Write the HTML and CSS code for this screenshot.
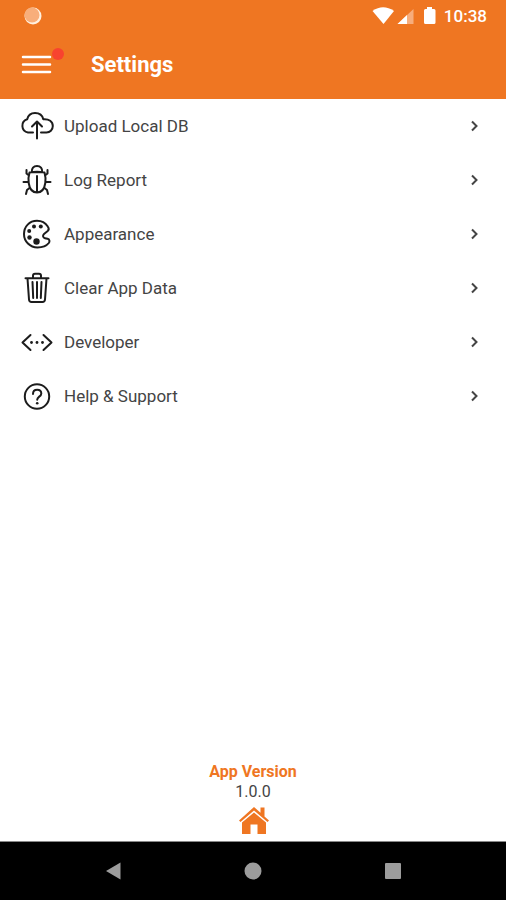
FILE: index.html
```html
<!DOCTYPE html>
<html lang="en">
<head>
<meta charset="utf-8">
<meta name="viewport" content="width=device-width, initial-scale=1">
<title>Settings</title>
<link rel="stylesheet" href="styles.css">
</head>
<body>
<header class="top">
  <div class="status">
    <svg class="status-sync" viewBox="0 0 18 18" aria-hidden="true"><circle cx="9" cy="9" r="8.500" fill="#fff0df"/><circle cx="8" cy="8" r="7.500" fill="#f8ae7b"/></svg>
    <div class="status-right">
      <svg class="status-icons" viewBox="0 0 66 20" aria-hidden="true">
        <path d="M.5 5Q11 -2.500 22 5L11.500 18Z" fill="#fff"/>
        <path d="M41.500 3v15H25.500Z" fill="#f7ad7c"/>
        <path d="M35 9v9h-9.500Z" fill="#fff"/>
        <path d="M55 1h5v2h2q1.500 0 1.500 1.500v12q0 1.500-1.500 1.500h-8.500q-1.500 0-1.500-1.500v-12q0-1.500 1.500-1.500h1.500Z" fill="#fff"/>
      </svg>
      <span class="clock">10:38</span>
    </div>
  </div>
  <div class="bar">
    <button class="menu" type="button" aria-label="Menu">
      <svg class="menu-icon" viewBox="0 0 32 20" aria-hidden="true"><path d="M2 2h27M2 9.500h27M2 17h27" stroke="#fff" stroke-width="2.500" stroke-linecap="round"/></svg>
      <span class="badge"></span>
    </button>
    <h1 class="title">Settings</h1>
  </div>
</header>
<main class="main">
  <nav class="list" aria-label="Settings">
    <a class="row" href="#upload">
      <svg class="icon" viewBox="0 0 36 36"><path d="M14 24.500H9a6.800 6.800 0 0 1-.8-13.200C9 7.800 11.500 5 16 5c4.400 0 7.500 2.600 8.300 6.300C30 10.800 33.800 13.500 33.800 18c0 4-3 6.500-6.300 6.500H22M18 30.500v-17M13 18.500l5-5 5 5"/></svg>
      <span class="label">Upload Local DB</span>
      <svg class="chevron" viewBox="0 0 12 12"><path d="M4 1.500 8.500 6 4 10.500"/></svg>
    </a>
    <a class="row" href="#log">
      <svg class="icon" viewBox="0 0 36 36"><path d="M12.800 10.200C12.500 6.500 14.500 4 18 4s5.500 2.500 5.200 6.200ZM10.500 10.500Q18 9 25.500 10.500C26.500 14 27 17 26.300 21 25.500 26.500 22.500 30.500 18 30.500s-7.500-4-8.300-9.500c-.7-4-.2-7 .8-10.500ZM18 14V29M10 13.500 7.500 11.500V8M26 13.500l2.500-2V8M9.500 20H4.500M26.500 20H31.500M10.500 26l-2.500 2-1 4M25.500 26l2.500 2 1 4"/></svg>
      <span class="label">Log Report</span>
      <svg class="chevron" viewBox="0 0 12 12"><path d="M4 1.500 8.500 6 4 10.500"/></svg>
    </a>
    <a class="row" href="#appearance">
      <svg class="icon" viewBox="0 0 36 36"><path d="M28.800 10.500C26.500 7 22.500 4.800 18 4.800 10.500 4.800 5 10.500 5 18s6 13.500 13.500 13.500c4.500 0 9-1.600 11.300-4.500 1.200-1.600.8-3.700-1.300-4.200l-2.500-.6c-2-.5-2.700-2.700-1-4.200l3.700-3c1.500-1.300 1-3.200.1-4.500Z"/><g class="solid"><circle cx="15" cy="10.500" r="2"/><circle cx="21.800" cy="10.500" r="2"/><circle cx="10.200" cy="15" r="2"/><circle cx="10.500" cy="21.500" r="2.200"/><circle cx="17.500" cy="25.500" r="3.200"/></g></svg>
      <span class="label">Appearance</span>
      <svg class="chevron" viewBox="0 0 12 12"><path d="M4 1.500 8.500 6 4 10.500"/></svg>
    </a>
    <a class="row" href="#clear">
      <svg class="icon" viewBox="0 0 36 36"><path d="M6.500 8.200h23M14 8V5.800q0-2 2-2h4q2 0 2 2V8M8.500 8.500l1.500 21q.2 2.500 2.500 2.500h11q2.300 0 2.500-2.500L27.500 8.500M13.500 12l.7 16M18 12v16M22.500 12l-.7 16"/></svg>
      <span class="label">Clear App Data</span>
      <svg class="chevron" viewBox="0 0 12 12"><path d="M4 1.500 8.500 6 4 10.500"/></svg>
    </a>
    <a class="row" href="#developer">
      <svg class="icon" viewBox="0 0 36 36"><path d="M11.500 11 3.500 18.500l8 7.500M24.500 11l8 7.500-8 7.500"/><g class="solid"><circle cx="12.500" cy="18.500" r="1.400"/><circle cx="18" cy="18.500" r="1.400"/><circle cx="23.500" cy="18.500" r="1.400"/></g></svg>
      <span class="label">Developer</span>
      <svg class="chevron" viewBox="0 0 12 12"><path d="M4 1.500 8.500 6 4 10.500"/></svg>
    </a>
    <a class="row" href="#help">
      <svg class="icon" viewBox="0 0 36 36"><circle cx="18" cy="18.500" r="12.200"/><path d="M14 16c0-2.700 1.700-4.300 4.200-4.300 2.400 0 4.100 1.500 4.100 3.700 0 3.200-4.100 3.200-4.100 6.300"/><circle class="solid" cx="18.200" cy="25.200" r="1.300"/></svg>
      <span class="label">Help &amp; Support</span>
      <svg class="chevron" viewBox="0 0 12 12"><path d="M4 1.500 8.500 6 4 10.500"/></svg>
    </a>
  </nav>
  <footer class="version">
    <strong class="version-name">App Version</strong>
    <span class="version-number">1.0.0</span>
    <svg class="home" viewBox="0 0 32 30" aria-hidden="true"><path d="M17 1 2 14.500l1.500 1.500L17 4.500 30.500 16l1.500-1.500-4.500-4V1.500h-4v5.300Z"/><path d="M17 6.500 5 16.500V28h8.500V18.500h7V28H29V16.500Z"/></svg>
  </footer>
</main>
<nav class="system" aria-label="System">
  <button class="key" type="button" aria-label="Back"><svg class="key-icon" viewBox="0 0 18 18"><path d="M2 9 16.500 .5v17Z"/></svg></button>
  <button class="key" type="button" aria-label="Home"><svg class="key-icon" viewBox="0 0 18 18"><circle cx="9" cy="9" r="8.500"/></svg></button>
  <button class="key" type="button" aria-label="Recent apps"><svg class="key-icon" viewBox="0 0 18 18"><rect x="1" y="1" width="16" height="16" rx="1"/></svg></button>
</nav>
</body>
</html>
```
FILE: styles.css
```css
* {
  box-sizing: border-box;
}

body {
  margin: 0;
  min-height: 100vh;
  display: flex;
  flex-direction: column;
  background: #fff;
  color: #444;
  font-family: Roboto, "Liberation Sans", sans-serif;
}

button {
  padding: 0;
  border: 0;
  background: none;
}

svg {
  display: block;
  flex: none;
}

.top {
  background: #ef7622;
  color: #fff;
  padding-bottom: 9px;
}

.status {
  display: flex;
  align-items: center;
  justify-content: space-between;
  height: 32px;
  padding: 0 19px 0 24px;
}

.status-sync {
  width: 18px;
  height: 18px;
}

.status-right {
  display: flex;
  align-items: center;
  gap: 6px;
}

.status-icons {
  width: 66px;
  height: 20px;
}

.clock {
  font-size: 17px;
  font-weight: 500;
  line-height: 32px;
}

.bar {
  display: flex;
  align-items: center;
  gap: 38px;
  height: 56px;
  margin-top: 2px;
  padding: 5px 21px 0;
}

.menu {
  position: relative;
}

.menu-icon {
  width: 32px;
  height: 20px;
}

.badge {
  position: absolute;
  top: -7px;
  right: -11px;
  width: 12px;
  height: 12px;
  border-radius: 50%;
  background: #f8432f;
}

.title {
  margin: 0;
  font-size: 22px;
  font-weight: 700;
  line-height: 28px;
}

.main {
  display: flex;
  flex: 1;
  flex-direction: column;
  justify-content: space-between;
}

.row {
  display: flex;
  align-items: center;
  height: 54px;
  padding: 0 26px 0 19px;
  color: inherit;
  text-decoration: none;
}

.icon {
  width: 36px;
  height: 36px;
  fill: none;
  stroke: #1c1c1c;
  stroke-width: 2;
  stroke-linecap: round;
  stroke-linejoin: round;
}

.solid {
  fill: #1c1c1c;
  stroke: none;
}

.label {
  flex: 1;
  margin-left: 9px;
  padding-bottom: 1px;
  font-size: 17px;
  line-height: 24px;
}

.chevron {
  width: 12px;
  height: 12px;
  fill: none;
  stroke: #444;
  stroke-width: 2;
}

.version {
  display: flex;
  flex-direction: column;
  align-items: center;
  padding-bottom: 5px;
  font-size: 16px;
  line-height: 20px;
}

.version-name {
  color: #ef7622;
  font-weight: 700;
}

.home {
  width: 32px;
  height: 30px;
  margin-top: 4px;
  fill: #ef7622;
}

.system {
  display: flex;
  justify-content: center;
  height: 59px;
  border-top: 1px solid #888;
  background: #000;
}

.key {
  display: grid;
  place-items: center;
  width: 140px;
}

.key-icon {
  width: 18px;
  height: 18px;
  fill: #9c9c9c;
}
```
